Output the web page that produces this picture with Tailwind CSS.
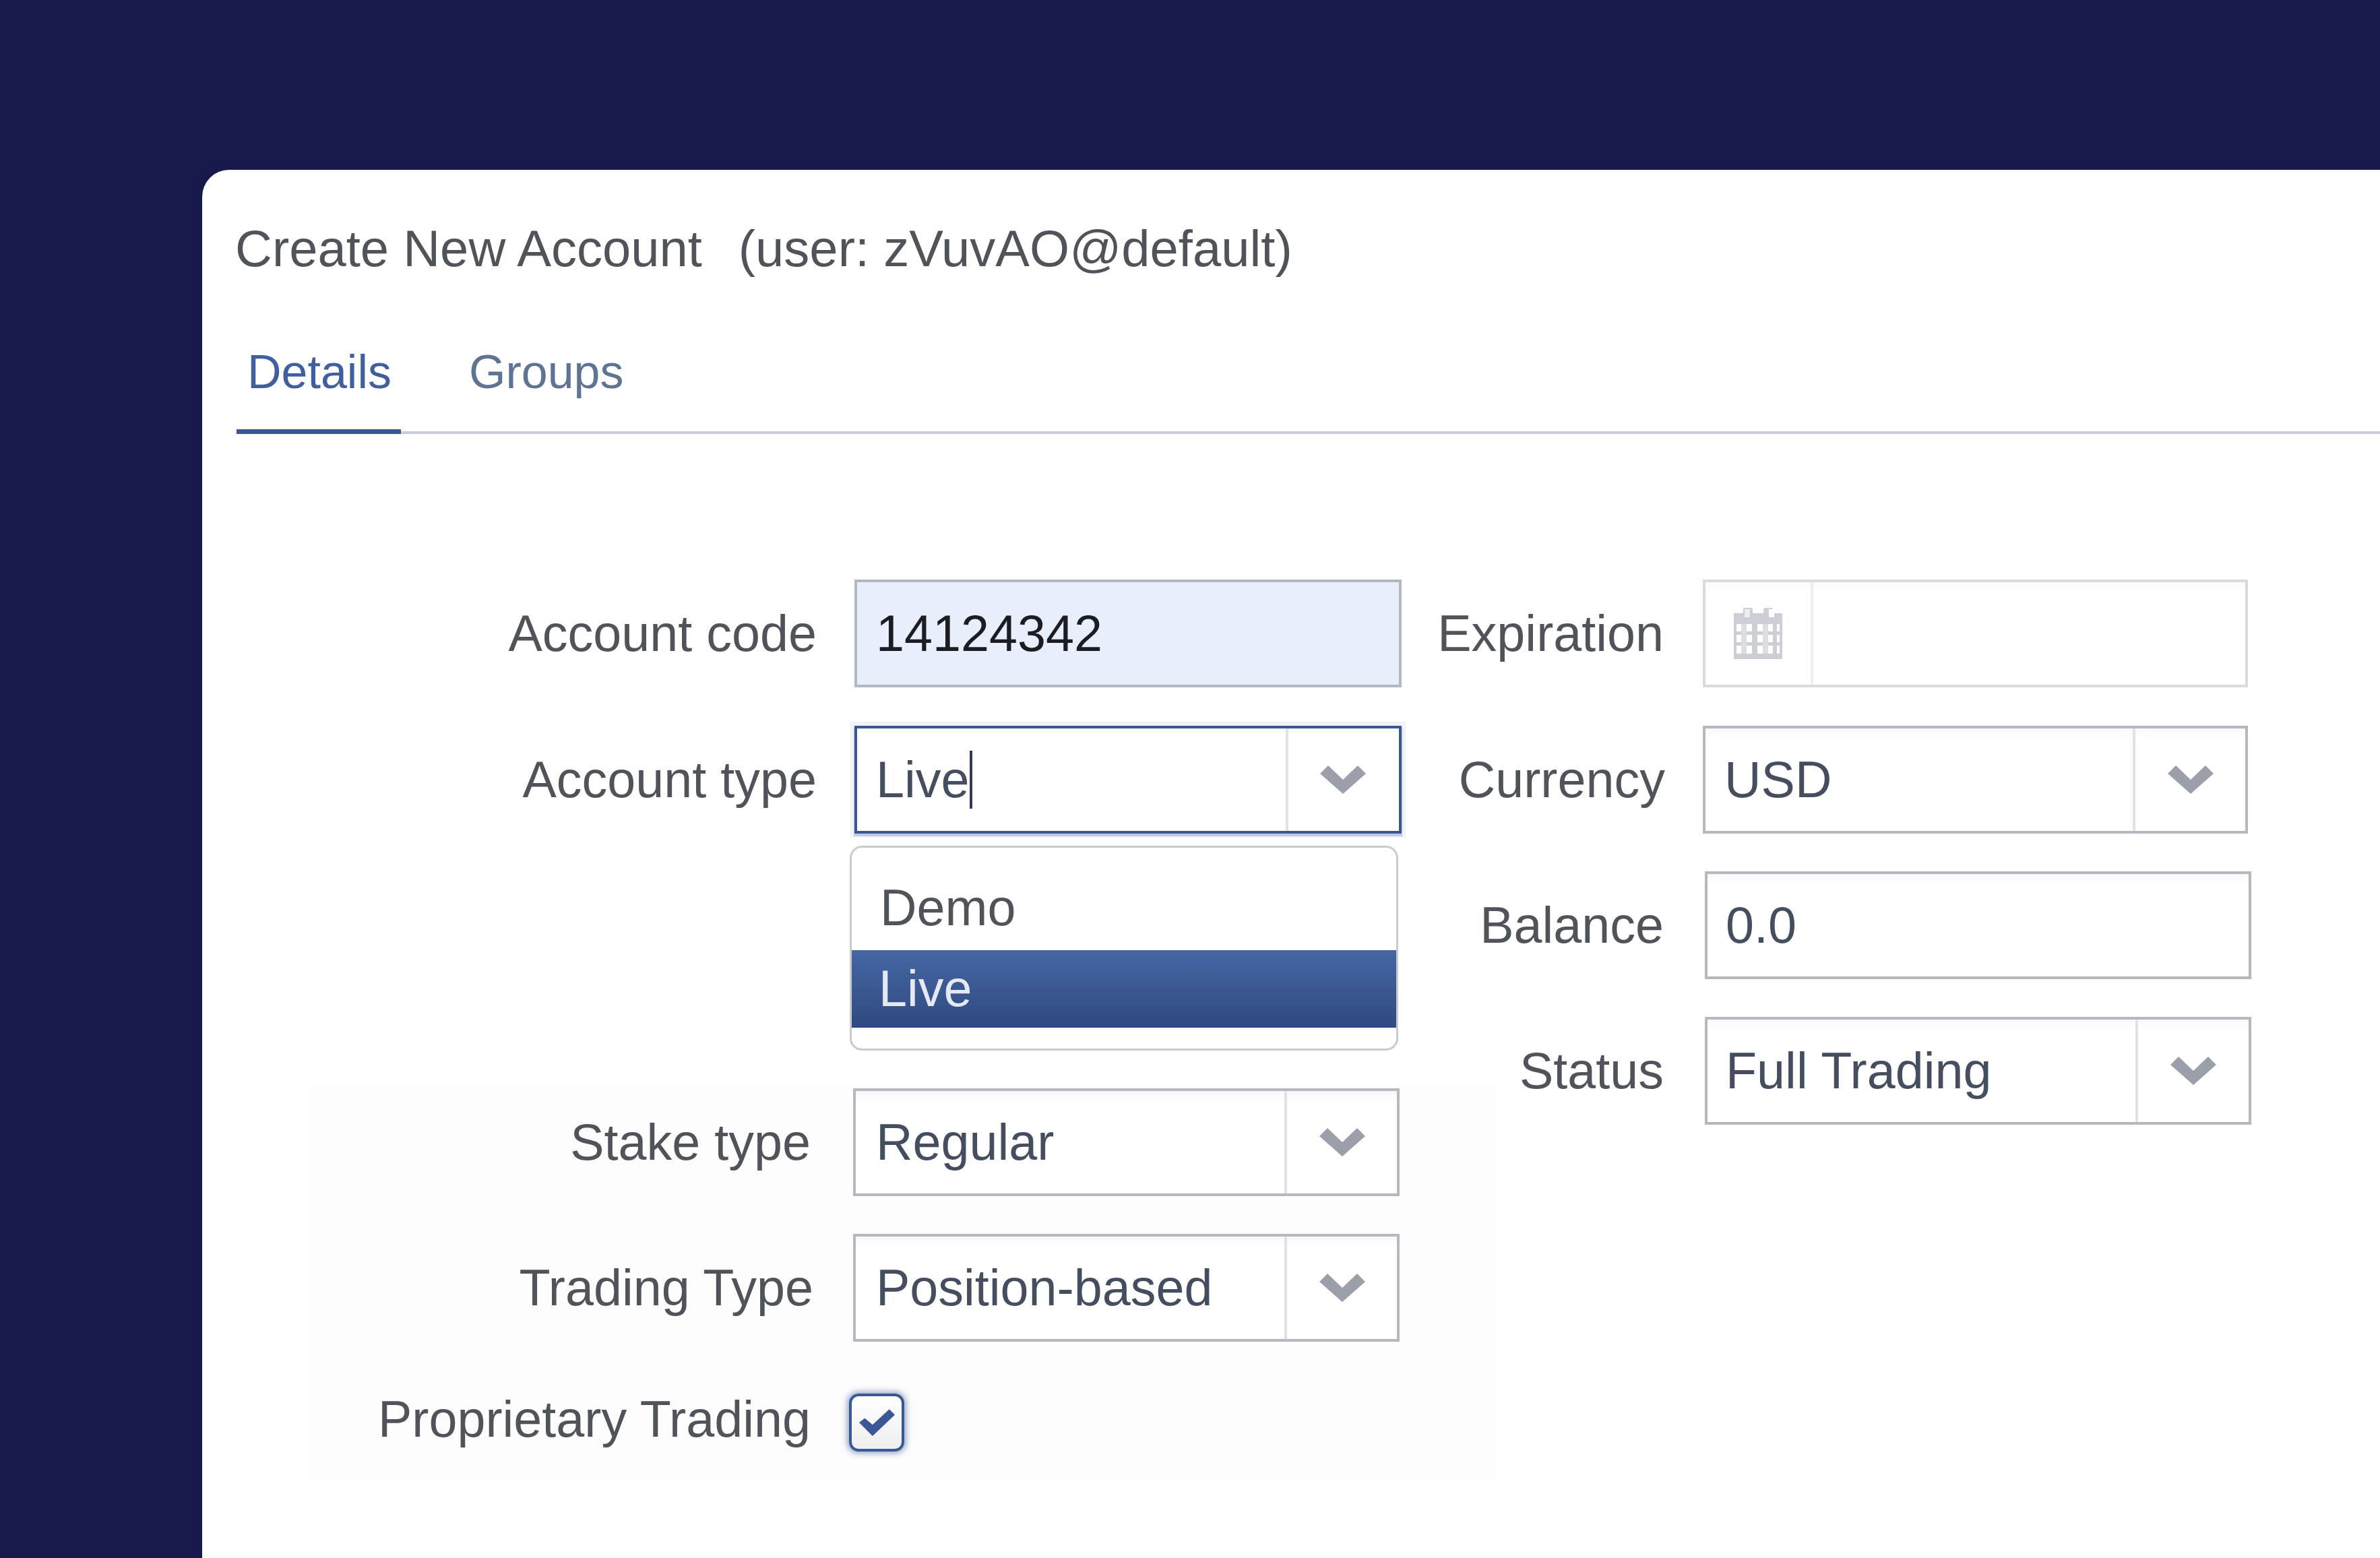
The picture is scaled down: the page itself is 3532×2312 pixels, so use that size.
<!DOCTYPE html>
<html>
<head>
<meta charset="utf-8">
<script src="https://cdn.jsdelivr.net/npm/@tailwindcss/browser@4"></script>
<title>Create New Account</title>
</head>
<body class="m-0">
<div class="w-[3532px] h-[2312px] overflow-hidden bg-[#151a4a] pl-[300px] pt-[252px] font-['Liberation_Sans',Arial,sans-serif] text-[75.5px] leading-[86px] text-[#50545a]">
  <main class="h-[2060px] bg-white rounded-tl-[40px] pl-[49px] pt-[74px] blur-[0.7px]">
    <div class="flex whitespace-pre text-[76px]"><span>Create New Account</span><span class="ml-[54px]">(user: zVuvAO@default)</span></div>

    <nav class="mt-[94px] ml-[2px] flex h-[138px] border-b-4 border-[#c9cdd7] text-[70px] leading-[92px]">
      <div class="w-[244px] h-[138px] pl-[16px] border-b-[7px] border-[#3a5895] text-[#3f5f9f]">Details</div>
      <div class="ml-[101px] text-[#5f7494]">Groups</div>
    </nav>

    <section class="mt-[216px] flex items-start">
      <div class="w-[1731px] shrink-0">
        <div class="flex items-center h-[160px]">
          <label class="w-[863px] text-right">Account code</label>
          <div class="ml-[56px] w-[812px] h-[160px] border-4 border-[#b5b8c1] bg-[#e8eefb] pl-[28px] leading-[152px] text-[#1b1d22]">14124342</div>
        </div>

        <div class="flex items-center h-[160px] mt-[57px]">
          <label class="w-[863px] text-right">Account type</label>
          <div class="ml-[56px] w-[812px] h-[160px] flex border-4 border-[#3a5895] bg-white text-[#454e5f] shadow-[0_0_0_6px_rgba(58,88,149,0.07),0_3px_0_1px_rgba(58,88,149,0.25)]">
            <div class="flex-1 pl-[28px] leading-[152px] flex items-center"><span>Live</span><span class="w-[4px] h-[86px] bg-[#2f3b55]"></span></div>
            <div class="w-[168px] border-l-4 border-[#e1e2e6] pr-[3px] flex items-center justify-center">
              <svg width="68" height="42" viewBox="0 0 68 42"><polygon fill="#9b9fa9" points="0,12 12,0 34,21 56,0 68,12 34,42"/></svg>
            </div>
          </div>
        </div>

        <div class="ml-[912px] mt-[18px] w-[814px] h-[304px] border-[3px] border-[#cbcbcb] rounded-[18px] overflow-hidden bg-white">
          <div class="h-[152px] pt-[46px] pl-[42px]">Demo</div>
          <div class="h-[115px] pl-[40px] leading-[115px] text-[#e4e9f4] bg-[linear-gradient(#4666a4,#2f4a80)]">Live</div>
        </div>

        <div class="ml-[113px] w-[1757px] mt-[51px] pt-[5px] pb-[43px] bg-[#fdfdfd]">
          <div class="flex items-center h-[160px]">
            <label class="w-[741px] text-right">Stake type</label>
            <div class="ml-[63px] w-[811px] h-[160px] flex border-4 border-[#b5b8c1] bg-[linear-gradient(#f7f8fa,#fff_14px)] text-[#454e5f]">
              <div class="flex-1 pl-[30px] leading-[152px]">Regular</div>
              <div class="w-[167px] border-l-4 border-[#e1e2e6] flex items-center justify-center">
                <svg width="68" height="42" viewBox="0 0 68 42"><polygon fill="#9b9fa9" points="0,12 12,0 34,21 56,0 68,12 34,42"/></svg>
              </div>
            </div>
          </div>

          <div class="flex items-center h-[160px] mt-[56px]">
            <label class="w-[745px] text-right">Trading Type</label>
            <div class="ml-[59px] w-[811px] h-[160px] flex border-4 border-[#b5b8c1] bg-[linear-gradient(#f7f8fa,#fff_14px)] text-[#454e5f]">
              <div class="flex-1 pl-[30px] leading-[152px]">Position-based</div>
              <div class="w-[167px] border-l-4 border-[#e1e2e6] flex items-center justify-center">
                <svg width="68" height="42" viewBox="0 0 68 42"><polygon fill="#9b9fa9" points="0,12 12,0 34,21 56,0 68,12 34,42"/></svg>
              </div>
            </div>
          </div>

          <div class="flex items-center h-[85px] mt-[77px]">
            <label class="w-[741px] text-right -mt-[10px]">Proprietary Trading</label>
            <div class="ml-[57px] w-[82px] h-[86px] rounded-[14px] border-4 border-[#3a5895] bg-[linear-gradient(#fff,#eeeeee)] shadow-[0_0_8px_3px_rgba(58,88,149,0.5)] flex items-center justify-center">
              <svg width="53" height="40" viewBox="110 155 160 120"><polygon fill="#3a5895" points="110,215 135,195 170,225 245,155 270,180 170,275"/></svg>
            </div>
          </div>
        </div>
      </div>

      <div class="w-[1290px] shrink-0">
        <div class="flex items-center h-[160px]">
          <label class="w-[389px] text-right">Expiration</label>
          <div class="ml-[58px] w-[809px] h-[160px] flex border-4 border-[#d8dade] bg-[linear-gradient(#f9f9fa,#fff_12px)]">
            <div class="w-[160px] border-r-4 border-[#eeeef0] flex items-center justify-center">
              <svg width="80" height="76" viewBox="0 0 80 76" fill="none">
                <path fill="#cdcfd6" d="M4 8h14V2a2 2 0 0 1 2-2h10a2 2 0 0 1 2 2v6h16V2a2 2 0 0 1 2-2h10a2 2 0 0 1 2 2v6h14v68H4z"/>
                <rect x="20" y="2" width="8" height="12" fill="#eceef0"/><rect x="56" y="2" width="8" height="12" fill="#fff"/>
                <path fill="#fff" d="M8 24h7v11H8zM23 24h8v11h-8zM39 24h8v11h-8zM55 24h7v11h-7zM68 24h4v11h-4zM8 40h7v11H8zM23 40h8v11h-8zM39 40h8v11h-8zM55 40h7v11h-7zM68 40h4v11h-4zM8 56h7v12H8zM23 56h8v12h-8zM39 56h8v12h-8zM55 56h7v12h-7zM68 56h4v12h-4z"/>
                <path fill="#e6e7ea" d="M15 24h8v44h-8zM47 24h8v44h-8z" opacity=".6"/>
              </svg>
            </div>
          </div>
        </div>

        <div class="flex items-center h-[160px] mt-[57px]">
          <label class="w-[391px] text-right">Currency</label>
          <div class="ml-[56px] w-[809px] h-[160px] flex border-4 border-[#b5b8c1] bg-[linear-gradient(#f7f8fa,#fff_14px)] text-[#454e5f]">
            <div class="flex-1 pl-[28px] leading-[152px]">USD</div>
            <div class="w-[167px] border-l-4 border-[#e1e2e6] flex items-center justify-center">
              <svg width="68" height="42" viewBox="0 0 68 42"><polygon fill="#9b9fa9" points="0,12 12,0 34,21 56,0 68,12 34,42"/></svg>
            </div>
          </div>
        </div>

        <div class="flex items-center h-[160px] mt-[56px]">
          <label class="w-[389px] text-right">Balance</label>
          <div class="ml-[61px] w-[811px] h-[160px] border-4 border-[#b5b8c1] bg-[linear-gradient(#f7f8fa,#fff_14px)] pl-[27px] leading-[152px] text-[#454e5f]">0.0</div>
        </div>

        <div class="flex items-center h-[160px] mt-[56px]">
          <label class="w-[389px] text-right">Status</label>
          <div class="ml-[61px] w-[811px] h-[160px] flex border-4 border-[#b5b8c1] bg-[linear-gradient(#f7f8fa,#fff_14px)] text-[#454e5f]">
            <div class="flex-1 pl-[27px] leading-[152px]">Full Trading</div>
            <div class="w-[168px] border-l-4 border-[#e1e2e6] flex items-center justify-center">
              <svg width="68" height="42" viewBox="0 0 68 42"><polygon fill="#9b9fa9" points="0,12 12,0 34,21 56,0 68,12 34,42"/></svg>
            </div>
          </div>
        </div>
      </div>
    </section>
  </main>
</div>
</body>
</html>
